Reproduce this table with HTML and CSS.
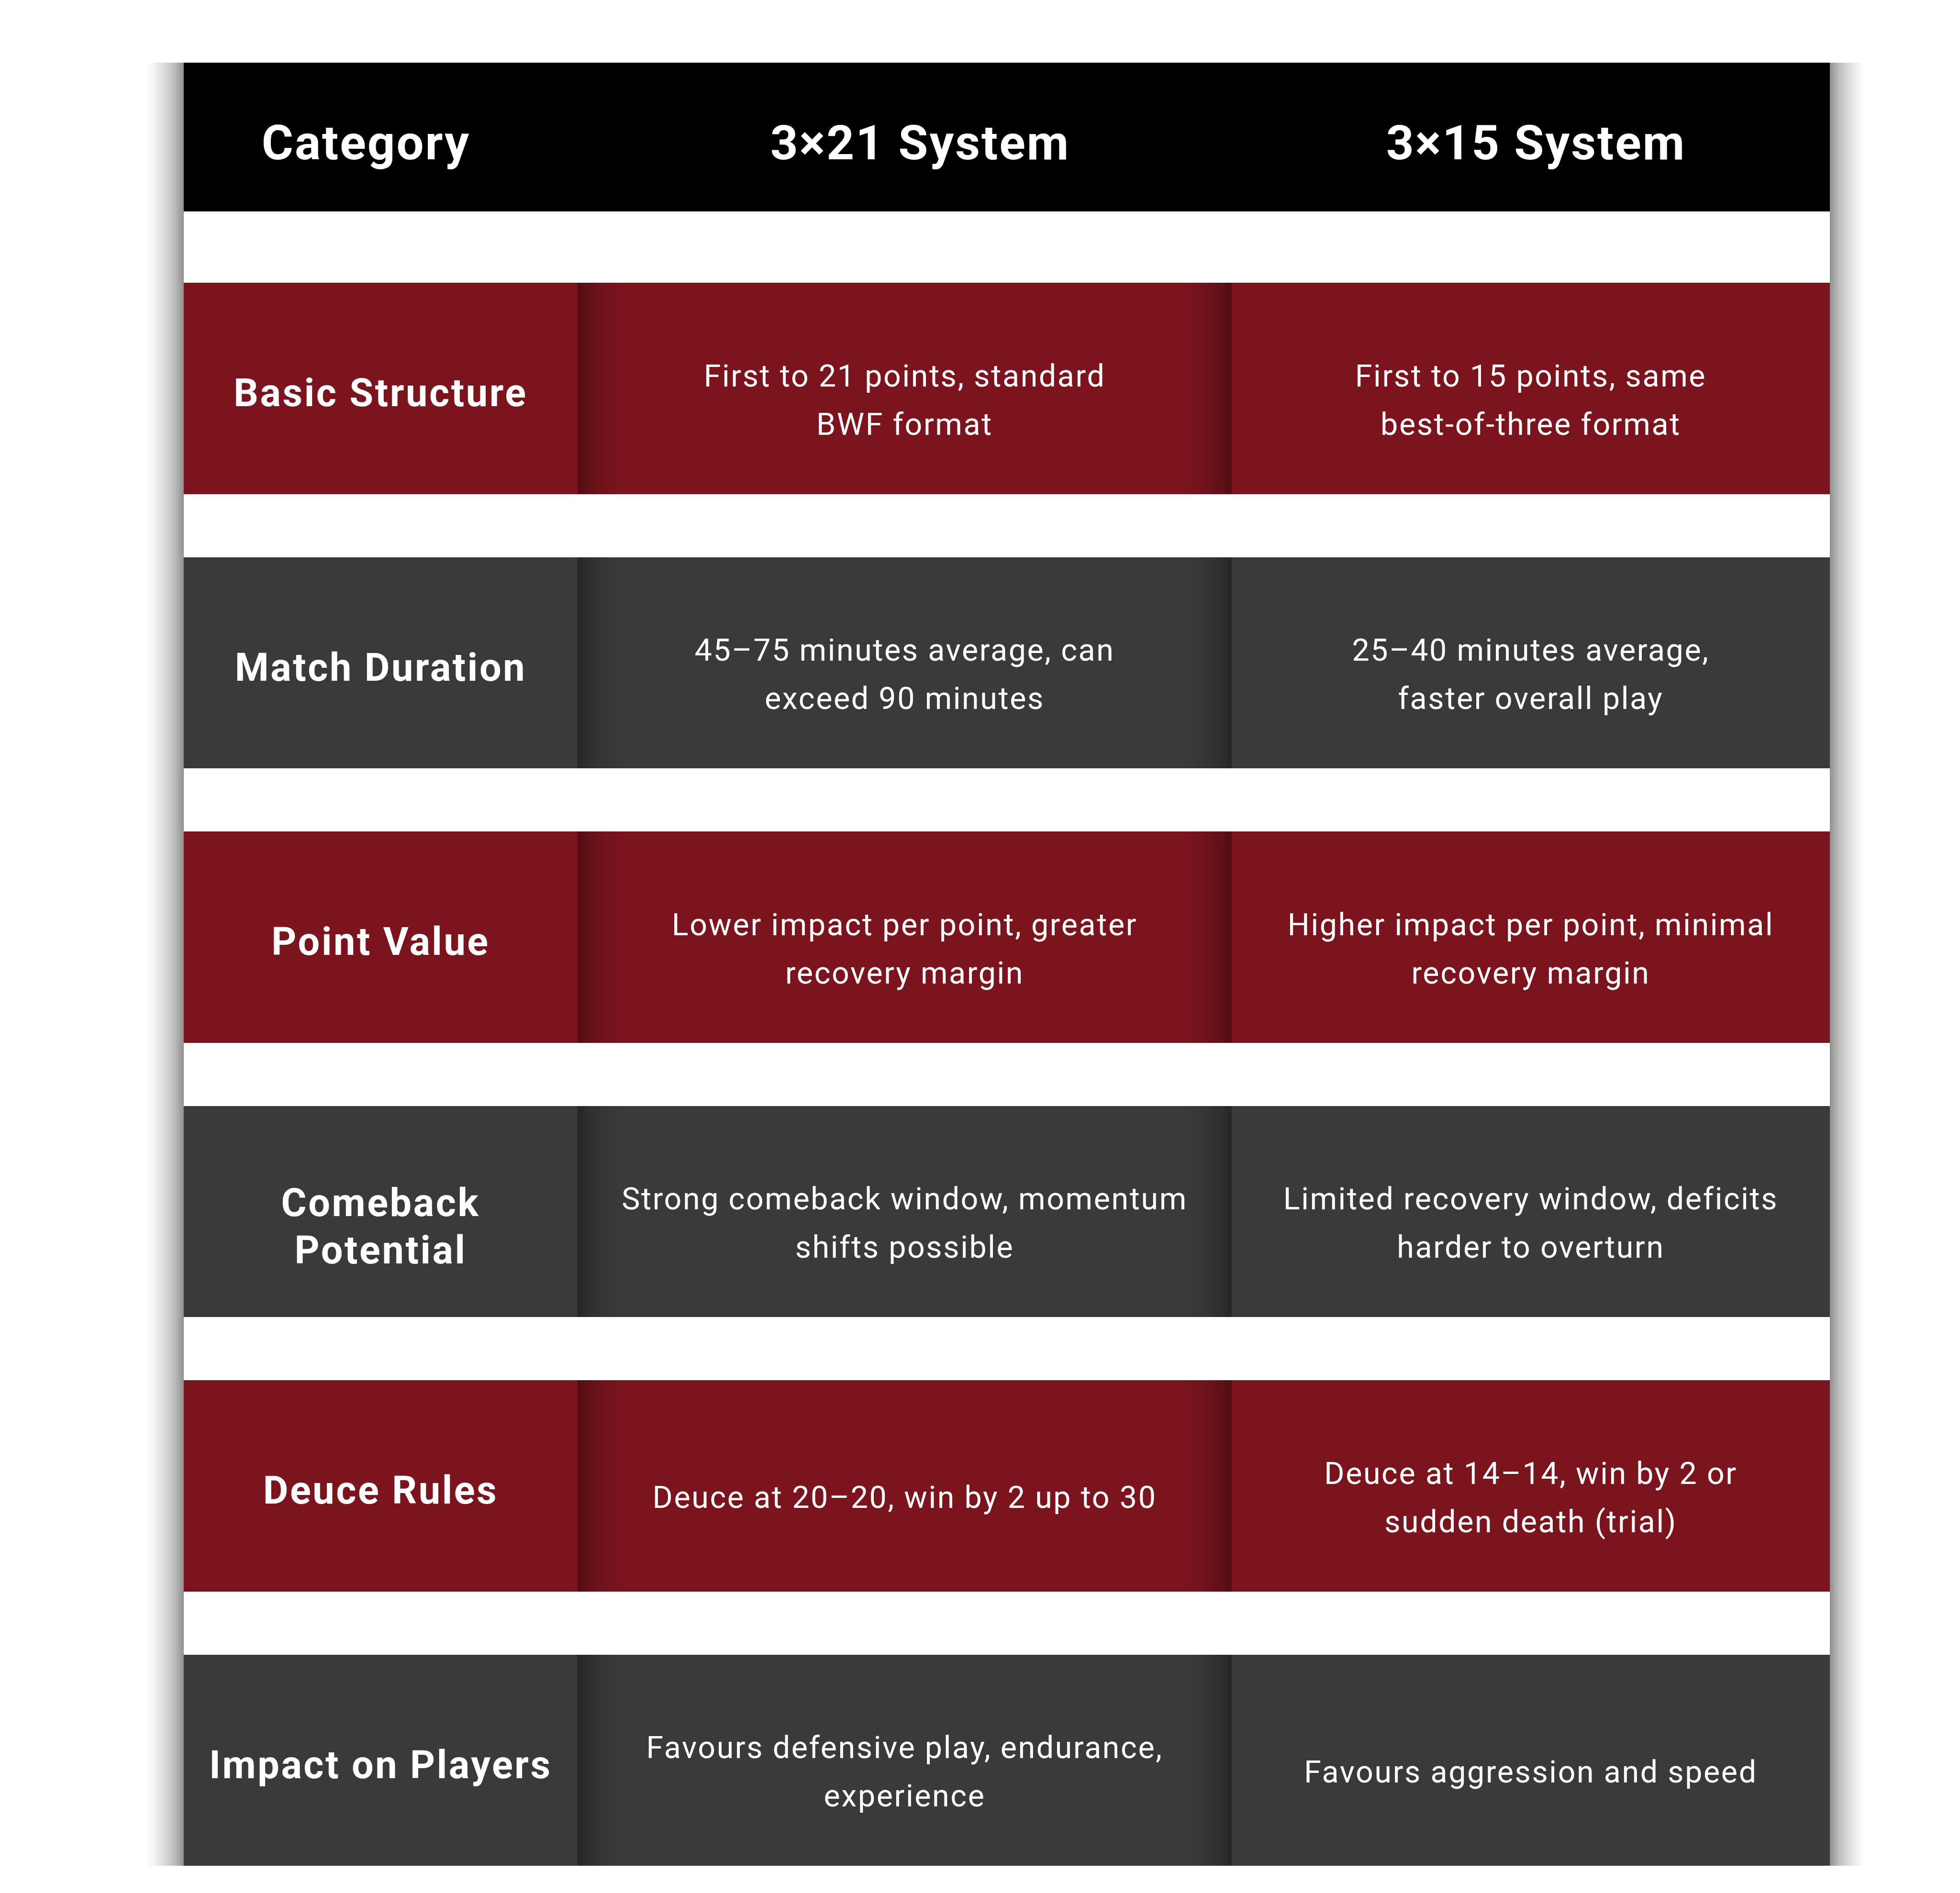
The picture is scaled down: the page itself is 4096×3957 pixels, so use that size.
FILE: index.html
```html
<!DOCTYPE html>
<html lang="en">
<head>
<meta charset="utf-8">
<title>3×21 vs 3×15 Scoring Systems</title>
<link rel="stylesheet" href="styles.css">
</head>
<body>
<div class="page">
  <div class="frame">
    <div class="table">
      <div class="head">
        <div class="hcell">Category</div>
        <div class="hcell">3×21 System</div>
        <div class="hcell">3×15 System</div>
      </div>

      <div class="row red">
        <div class="label">Basic Structure</div>
        <div class="cell mid">First to 21 points, standard<br>BWF format</div>
        <div class="cell">First to 15 points, same<br>best-of-three format</div>
      </div>

      <div class="row dark">
        <div class="label">Match Duration</div>
        <div class="cell mid">45–75 minutes average, can<br>exceed 90 minutes</div>
        <div class="cell">25–40 minutes average,<br>faster overall play</div>
      </div>

      <div class="row red">
        <div class="label">Point Value</div>
        <div class="cell mid">Lower impact per point, greater<br>recovery margin</div>
        <div class="cell">Higher impact per point, minimal<br>recovery margin</div>
      </div>

      <div class="row dark">
        <div class="label two">Comeback<br>Potential</div>
        <div class="cell mid">Strong comeback window, momentum<br>shifts possible</div>
        <div class="cell">Limited recovery window, deficits<br>harder to overturn</div>
      </div>

      <div class="row red">
        <div class="label">Deuce Rules</div>
        <div class="cell mid">Deuce at 20–20, win by 2 up to 30</div>
        <div class="cell">Deuce at 14–14, win by 2 or<br>sudden death (trial)</div>
      </div>

      <div class="row dark">
        <div class="label">Impact on Players</div>
        <div class="cell mid">Favours defensive play, endurance,<br>experience</div>
        <div class="cell">Favours aggression and speed</div>
      </div>
    </div>
  </div>
</div>
</body>
</html>
```

FILE: styles.css
```css
html, body {
  margin: 0;
  padding: 0;
  background: #ffffff;
}

body {
  font-family: Roboto, "Liberation Sans", Arial, sans-serif;
  color: #ffffff;
}

.page {
  padding: 131px 0 0 306px;
}

.frame {
  width: 3591px;
  box-sizing: border-box;
  padding: 0 73px 0 78px;
  background:
    linear-gradient(to right, #ffffff 0, #f4f4f4 14px, #dcdcdc 36px, #bdbdbd 58px, #9a9a9a 74px, #8e8e8e 78px, transparent 78px),
    linear-gradient(to left, #ffffff 0, #f4f4f4 13px, #dcdcdc 34px, #bdbdbd 54px, #9a9a9a 69px, #8e8e8e 73px, transparent 73px);
}

.table {
  width: 3440px;
  display: flex;
  flex-direction: column;
  gap: 132px;
  background: #ffffff;
}

.head {
  height: 311px;
  margin-bottom: 17px;
  background: #000000;
  display: grid;
  grid-template-columns: 762px 1554px 1020px;
  padding-right: 104px;
  box-sizing: border-box;
}

.hcell {
  display: flex;
  align-items: center;
  justify-content: center;
  padding-top: 24px;
  font-weight: 700;
  font-size: 101px;
  letter-spacing: 3px;
  white-space: nowrap;
}

.row {
  height: 441.5px;
  display: grid;
  grid-template-columns: 823px 1367px 1250px;
}

.row.red {
  background: #7b141d;
}

.row.dark {
  background: #3a3a3a;
}

.label {
  display: flex;
  align-items: center;
  justify-content: center;
  text-align: center;
  padding-top: 20px;
  font-weight: 700;
  font-size: 81px;
  line-height: 99px;
  letter-spacing: 3.6px;
  white-space: nowrap;
}

.label.two {
  padding-top: 64px;
}

.cell {
  display: flex;
  align-items: center;
  justify-content: center;
  text-align: center;
  padding-top: 50px;
  font-weight: 400;
  font-size: 64.5px;
  line-height: 101px;
  letter-spacing: 2.6px;
  white-space: nowrap;
}

.cell.mid {
  background:
    linear-gradient(to right, rgba(0, 0, 0, 0.36) 0, rgba(0, 0, 0, 0.22) 18px, rgba(0, 0, 0, 0.08) 55px, rgba(0, 0, 0, 0) 95px),
    linear-gradient(to left, rgba(0, 0, 0, 0.36) 0, rgba(0, 0, 0, 0.22) 18px, rgba(0, 0, 0, 0.08) 60px, rgba(0, 0, 0, 0) 105px);
}
```
